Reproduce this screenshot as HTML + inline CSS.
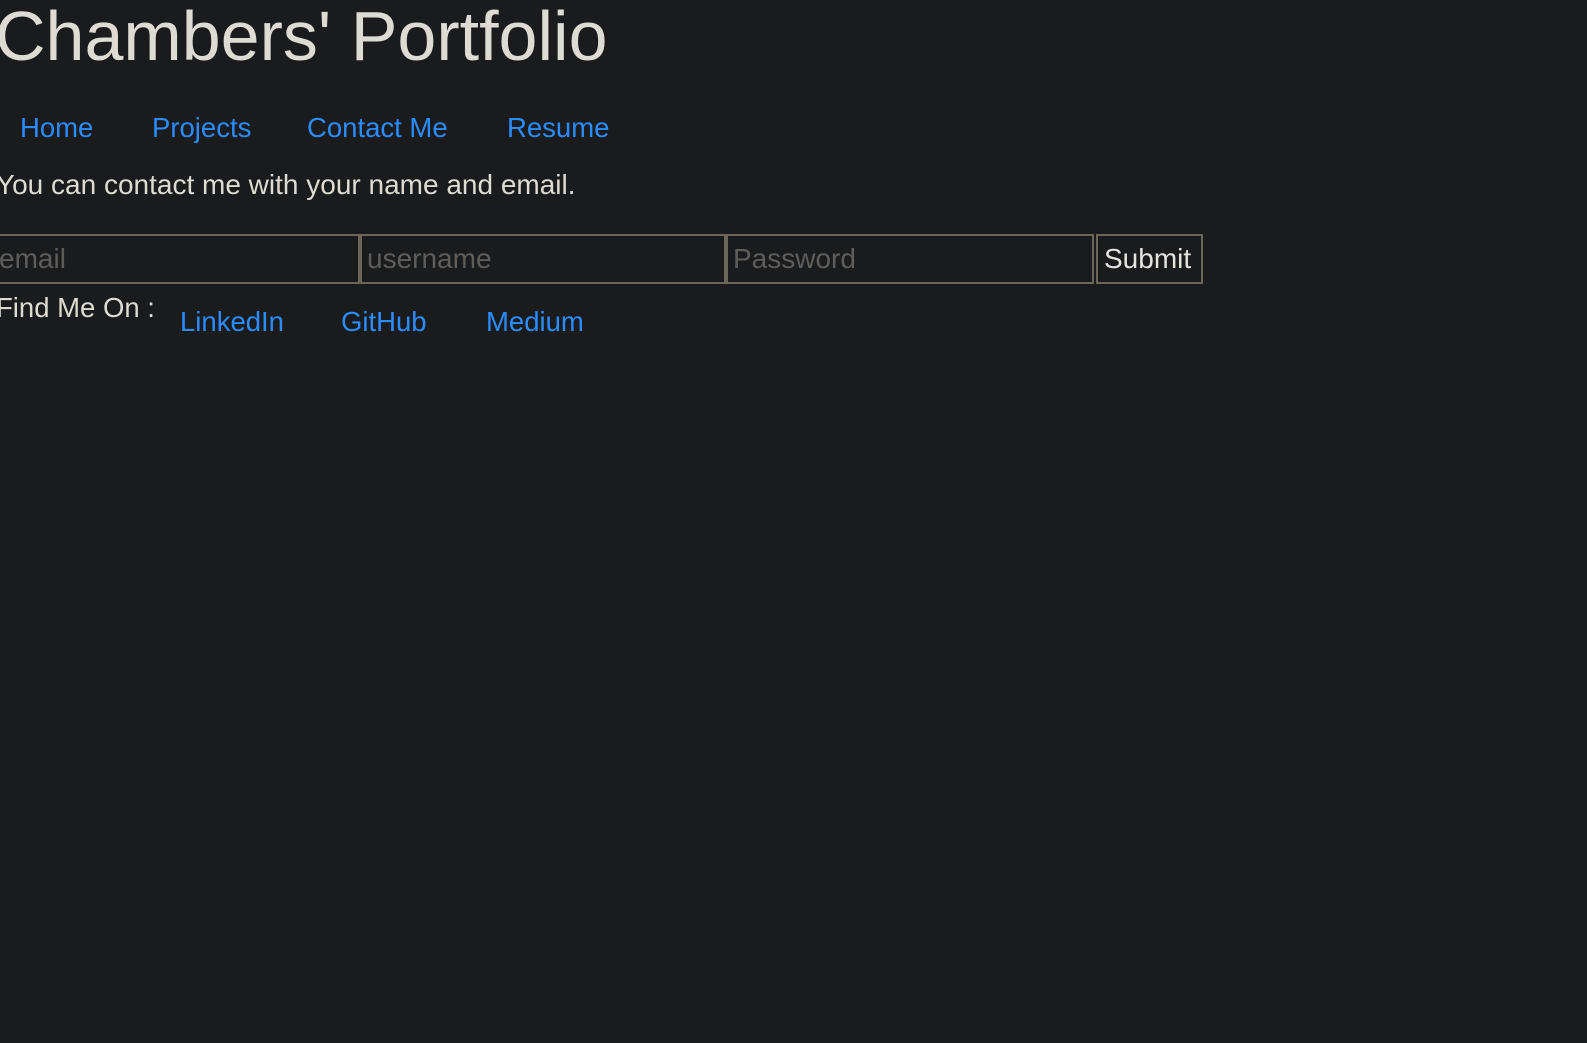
<!DOCTYPE html>
<html><head><meta charset="utf-8"><style>
body{margin:0;width:1587px;height:1043px;background:#1a1b1d;font-family:"Liberation Sans",sans-serif;color:#dedad4;overflow:hidden;position:relative}
.a{position:absolute;white-space:nowrap}
h1{margin:0;font-weight:normal;font-size:70px;letter-spacing:0px;left:-5px;top:-4px;color:#dedad4}
.l{color:#2a8cff;font-size:27.5px}
.t{font-size:27.5px}
.in{position:absolute;top:234px;height:46px;border:2px solid #6b665c;box-sizing:content-box;background:#1a1b1d;color:#5f5d59;font-size:28px;line-height:46px;padding-left:5px}
</style></head><body>
<h1 class="a">Chambers' Portfolio</h1>
<span class="a l" style="left:20px;top:112px">Home</span>
<span class="a l" style="left:152px;top:112px">Projects</span>
<span class="a l" style="left:307px;top:112px">Contact Me</span>
<span class="a l" style="left:507px;top:112px">Resume</span>
<span class="a t" style="left:-4px;top:169px;font-size:28px">You can contact me with your name and email.</span>
<div class="in" style="left:-8px;width:359px">email</div>
<div class="in" style="left:360px;width:357px">username</div>
<div class="in" style="left:726px;width:359px">Password</div>
<div class="in" style="left:1096px;width:97px;color:#e6e3de;padding-left:6px">Submit</div>
<span class="a t" style="left:-4px;top:292px">Find Me On :</span>
<span class="a l" style="left:180px;top:306px">LinkedIn</span>
<span class="a l" style="left:341px;top:306px">GitHub</span>
<span class="a l" style="left:486px;top:306px">Medium</span>
</body></html>
